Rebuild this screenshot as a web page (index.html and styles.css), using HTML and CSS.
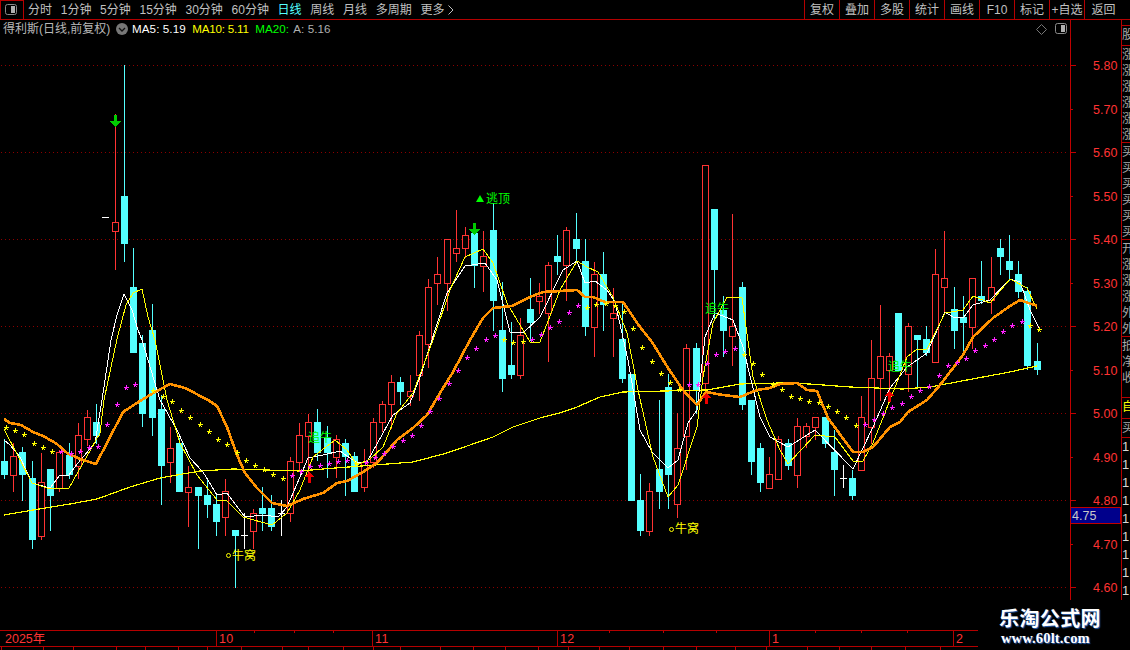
FILE: index.html
```html
<!DOCTYPE html>
<html lang="zh">
<head>
<meta charset="utf-8">
<title>得利斯 日线</title>
<link rel="stylesheet" href="styles.css">
</head>
<body>
<div class="page">
  <header class="toolbar">
    <div class="panel-btn">
      <svg class="panel-icon" width="13" height="12" viewBox="0 0 13 12"><rect class="ic-frame" x="0.5" y="0.5" width="11" height="10" rx="2"/><rect class="ic-fill" x="6" y="2" width="4" height="7"/></svg>
    </div>
    <nav class="periods">
      <span>分时</span><span>1分钟</span><span>5分钟</span><span>15分钟</span><span>30分钟</span><span>60分钟</span><span class="active">日线</span><span>周线</span><span>月线</span><span>多周期</span><span class="more-item">更多<svg class="more" width="6" height="10" viewBox="0 0 6 10"><path d="M0.5 0.5l4.5 4.5-4.5 4.5"/></svg></span>
    </nav>
    <div class="actions">
      <span>复权</span><span>叠加</span><span>多股</span><span>统计</span><span>画线</span><span>F10</span><span>标记</span><span>+自选</span><span class="last">返回</span>
    </div>
  </header>

  <div class="workspace">
    <div class="main">
      <div class="info">
        <span class="title">得利斯(日线,前复权)</span>
        <svg class="drop" width="12" height="12" viewBox="0 0 12 12"><circle class="drop-bg" cx="6" cy="6" r="6"/><path class="drop-ch" d="M3 5l3 3 3-3"/></svg>
        <span class="ma w">MA5: 5.19</span>
        <span class="ma y">MA10: 5.11</span>
        <span class="ma g">MA20:</span>
        <span class="ma a">A: 5.16</span>
        <span class="info-tools">
          <svg width="11" height="11" viewBox="0 0 11 11"><path class="ic-thin" d="M5.5 0.5l5 5-5 5-5-5z"/></svg>
          <svg width="13" height="12" viewBox="0 0 13 12"><rect class="ic-frame" x="0.5" y="0.5" width="11" height="10" rx="2"/><rect class="ic-fill" x="6" y="2" width="4" height="7"/></svg>
        </span>
      </div>
      <svg id="chart" class="chart" width="1121" height="562" viewBox="0 38 1121 562"></svg>
    </div>
    <aside class="strip">
      <div class="cell c1">股</div>
      <div class="cell c2">涨涨涨涨涨涨</div>
      <div class="cell c3">买买买买买买</div>
      <div class="cell c4">开涨涨涨外外</div>
      <div class="cell c5">抵净收</div>
      <div class="cell c6">自</div>
      <div class="cell c7">买</div>
      <div class="nums"><span>1</span><span>1</span><span>1</span><span>1</span><span>1</span><span>1</span><span>1</span><span>1</span><span>1</span></div>
    </aside>
  </div>

  <div class="spacer"></div>

  <div class="timeline">
    <span class="t t0">2025年</span><span class="t">10</span><span class="t">11</span><span class="t">12</span><span class="t">1</span><span class="t">2</span>
    <svg id="ticks" class="ticks" width="978" height="20" viewBox="0 630 978 20"></svg>
  </div>

  <div class="watermark">
    <div class="wm-cn">乐淘公式网</div>
    <div class="wm-en">www.60lt.com</div>
  </div>
</div>
<script src="chart.js"></script>
</body>
</html>
```
FILE: styles.css
```css
* { box-sizing: border-box; }
html, body { margin: 0; padding: 0; background: #000; }
body { font-family: "Liberation Sans", "Noto Sans CJK SC", sans-serif; font-size: 12px; color: #c0c0c0; overflow: hidden; }
.page { position: relative; width: 1130px; height: 650px; overflow: hidden; display: flex; flex-direction: column; background: #000; }

.toolbar { height: 20px; flex: none; display: flex; align-items: stretch; border-bottom: 1px solid #b40000; line-height: 19px; padding-top: 0; }
.panel-btn { width: 24px; border: 1px solid #b40000; border-bottom: 0; display: flex; align-items: center; padding-left: 4px; }
.ic-frame { fill: none; stroke: #8a8a8a; }
.ic-fill { fill: #b0b0b0; }
.ic-thin { fill: none; stroke: #777; }
.periods { display: flex; gap: 8.7px; padding-left: 4px; white-space: nowrap; padding-top: 1px; }
.periods .active { color: #54ffff; }
.more-item { display: flex; align-items: center; gap: 4px; }
.more { flex: none; }
.more path { fill: none; stroke: #c0c0c0; }
.actions { margin-left: auto; display: flex; }
.actions span { width: 35px; border-left: 1px solid #b40000; text-align: center; padding-top: 1px; }
.actions .last { width: 46px; padding-right: 8px; }

.workspace { height: 580px; flex: none; display: flex; }
.main { width: 1122px; flex: none; border-right: 1px solid #b40000; display: flex; flex-direction: column; }
.info { height: 18px; width: 1071px; flex: none; border-right: 1px solid #b40000; display: flex; align-items: center; white-space: nowrap; padding-left: 3px; line-height: 18px; }
.title { color: #b8b8b8; width: 113px; flex: none; }
.drop { flex: none; margin-right: 4px; }
.drop-bg { fill: #777; }
.drop-ch { fill: none; stroke: #111; stroke-width: 1.3; }
.ma { font-size: 11.6px; letter-spacing: 0.1px; margin-right: 6.5px; }
.ma.w { color: #fff; }
.ma.y { color: #ffff00; letter-spacing: -0.2px; }
.ma.g { color: #00ff00; margin-right: 4px; }
.ma.a { color: #b0b0b0; }
.info-tools { margin-left: auto; display: flex; align-items: center; gap: 8px; padding-right: 2px; }
.chart { display: block; flex: none; }

.grid { stroke: #8c0000; stroke-width: 1; fill: none; shape-rendering: crispEdges; }
.axis { stroke: #c00000; stroke-width: 1; shape-rendering: crispEdges; fill: none; }
.price { fill: #ff3333; font-size: 12.5px; font-family: "Liberation Sans", sans-serif; }
.wick-r, .body-r { fill: #ff3333; }
.body-r { stroke: #ff3333; fill: #000; shape-rendering: crispEdges; }
.wick-r, .wick-c, .body-c, .wick-d { shape-rendering: crispEdges; }
.wick-c, .body-c { fill: #54ffff; }
.wick-d { fill: #fff; }
.line { fill: none; shape-rendering: crispEdges; stroke-linejoin: round; }
.ma-white { stroke: #fff; stroke-width: 1; }
.ma-yellow { stroke: #ffff00; stroke-width: 1; }
.ma-long { stroke: #ffff00; stroke-width: 1.2; }
.ma-orange { stroke: #ff9200; stroke-width: 2.6; }
.star-y { stroke: #ffff00; stroke-width: 1; fill: none; shape-rendering: crispEdges; }
.star-m { stroke: #ff22ff; stroke-width: 1; fill: none; shape-rendering: crispEdges; }
.arrow-g { fill: #00cc00; shape-rendering: crispEdges; }
.arrow-r { fill: #ee0000; shape-rendering: crispEdges; }
.lab { font-family: "Noto Sans CJK SC", sans-serif; font-size: 12px; }
.lab-g { fill: #00ff00; }
.lab-y { fill: #ffff00; }
.ring { fill: none; stroke: #ffff00; stroke-width: 1; }
.tri { fill: #00ff00; }

.tag { fill: #00008b; stroke: #c00000; shape-rendering: crispEdges; }
.tag-text { fill: #c8c8c8; font-size: 12.5px; font-family: "Liberation Sans", sans-serif; }

.strip { width: 8px; flex: none; padding-top: 5px; display: flex; flex-direction: column; overflow: hidden; color: #a8a8a8; font-family: "Noto Sans CJK SC", sans-serif; line-height: 16px; }
.cell { overflow: hidden; width: 8px; border-top: 1px solid #b40000; word-break: break-all; flex: none; }
.c1 { height: 20px; }
.c2 { height: 97px; }
.c3 { height: 97px; }
.c4 { height: 97px; }
.c5 { height: 61px; }
.c6 { height: 21px; color: #ffff00; }
.c7 { height: 19px; }
.nums { border-top: 1px solid #b40000; display: flex; flex-direction: column; font-family: "Liberation Sans", sans-serif; font-size: 13px; line-height: 18px; color: #d8d8d8; overflow: hidden; }
.nums span { display: block; height: 18px; flex: none; }

.spacer { height: 30px; flex: none; }
.timeline { position: relative; width: 978px; height: 17px; flex: none; border-top: 1px solid #b40000; border-bottom: 1px solid #b40000; display: grid; grid-template-columns: 216px 156px 185px 212px 184px 25px; color: #ff3333; line-height: 16px; font-size: 12.5px; }
.t { padding-left: 2px; border-left: 1px solid #b40000; letter-spacing: 0.4px; }
.t0 { border-left: 0; padding-left: 5px; letter-spacing: 0; }
.ticks { position: absolute; left: 0; top: -1px; }

.watermark { position: absolute; left: 999px; top: 606px; width: 110px; color: #fff; }
.wm-cn { font-family: "Noto Sans CJK SC", sans-serif; font-weight: 700; font-size: 20px; line-height: 24px; letter-spacing: 0.4px; text-shadow: 1px 1px 1px #2a5fb0; }
.wm-en { font-family: "Liberation Serif", serif; font-weight: 700; font-size: 14.5px; line-height: 17px; padding-left: 2px; letter-spacing: 0.15px; text-shadow: 1px 1px 1px #2a5fb0; }
```
FILE: chart.js
```js
var NS = "http://www.w3.org/2000/svg";
var svg = document.getElementById("chart");

function el(parent, name, cls, attrs, text) {
  var e = document.createElementNS(NS, name);
  if (cls) e.setAttribute("class", cls);
  for (var k in attrs) e.setAttribute(k, attrs[k]);
  if (text) e.textContent = text;
  parent.appendChild(e);
  return e;
}
function col(i) { return Math.floor(4.5 + 9.22 * i); }

/* [high, low, bodyTop, bodyBottom, type] in chart pixels: r = up, c = down, d = doji */
var candles = [
[439,478,461,474,"c"],[443,491,456,475,"r"],[447,500,452,474,"c"],[461,548,478,539,"c"],
[453,539,482,536,"r"],[469,530,469,495,"c"],[450,491,452,488,"r"],[443,478,455,474,"c"],
[423,478,435,466,"r"],[410,445,417,439,"r"],[404,443,422,435,"c"],[217,217,217,217,"d"],
[114,269,222,231,"r"],[65,261,196,243,"c"],[248,352,287,352,"c"],[335,426,343,413,"c"],
[304,435,330,417,"c"],[395,504,409,465,"c"],[427,482,448,462,"r"],[438,491,443,491,"c"],
[466,526,487,492,"r"],[487,548,487,495,"c"],[478,517,495,504,"c"],[495,535,504,521,"c"],
[479,535,491,517,"r"],[530,587,530,535,"c"],[513,548,535,535,"d"],[509,548,513,531,"r"],
[487,530,508,513,"c"],[495,530,508,526,"c"],[500,535,513,513,"d"],[457,521,461,513,"r"],
[423,469,435,462,"r"],[414,473,422,436,"r"],[409,460,422,452,"c"],[426,477,438,452,"c"],
[435,477,439,457,"r"],[439,495,443,456,"c"],[452,491,456,491,"c"],[449,491,462,487,"r"],
[418,467,422,462,"r"],[401,431,404,422,"r"],[375,428,382,404,"r"],[377,404,382,391,"c"],
[375,405,391,396,"r"],[331,400,335,375,"r"],[279,367,287,344,"r"],[257,304,274,283,"r"],
[239,310,239,283,"r"],[210,261,248,253,"r"],[227,257,235,248,"r"],[223,287,233,265,"c"],
[231,291,256,266,"r"],[203,330,230,300,"c"],[282,391,330,378,"c"],[322,378,365,374,"c"],
[318,378,335,375,"r"],[278,340,309,322,"c"],[283,313,296,301,"r"],[262,361,265,313,"r"],
[235,274,256,261,"c"],[227,300,230,265,"r"],[213,261,239,248,"c"],[239,335,261,326,"c"],
[262,356,274,327,"r"],[252,330,274,304,"c"],[288,356,313,318,"r"],[304,382,339,378,"c"],
[374,500,374,500,"c"],[474,535,500,530,"c"],[483,535,491,531,"r"],[400,508,469,491,"c"],
[374,508,387,474,"c"],[413,517,448,504,"r"],[344,469,348,436,"r"],[343,413,348,390,"c"],
[165,403,165,383,"r"],[209,320,209,269,"c"],[296,356,310,330,"c"],[214,365,326,336,"r"],
[282,409,287,404,"c"],[400,474,400,461,"c"],[443,491,448,482,"c"],[457,488,474,488,"r"],
[436,479,439,479,"r"],[439,469,443,465,"c"],[418,487,426,475,"r"],[423,447,426,436,"r"],
[417,439,417,427,"r"],[417,447,417,443,"c"],[430,495,452,469,"c"],[465,487,478,478,"d"],
[470,499,478,495,"c"],[396,470,417,470,"r"],[340,443,378,427,"r"],[305,400,356,378,"r"],
[353,397,356,370,"r"],[313,370,313,370,"c"],[323,391,326,374,"r"],[335,387,335,339,"c"],
[326,355,339,352,"c"],[249,362,274,362,"r"],[231,313,278,287,"r"],[287,348,309,330,"c"],
[296,353,317,322,"c"],[278,348,278,327,"r"],[261,303,296,300,"c"],[257,313,287,300,"r"],
[239,274,248,256,"c"],[235,280,261,269,"c"],[261,297,274,291,"c"],[287,369,291,365,"c"],
[343,374,361,369,"c"]
];

var white = [4,440,10,445,20,457,32,483,50,488,60,475,69,475,78,463,95,443,102,400,111,340,117,315,124,294,132,310,138,330,142,340,160,400,177,430,190,458,203,472,217,495,227,493,245,517,263,515,278,517,287,507,300,477,308,458,323,455,340,451,357,463,367,462,393,415,410,403,420,377,447,293,465,266,485,263,497,280,510,332,523,333,540,317,563,270,577,261,585,283,595,281,607,290,615,302,628,360,640,430,652,452,668,468,678,460,688,423,697,410,705,337,715,313,733,320,743,347,760,417,770,437,788,447,815,430,853,469,873,427,890,388,907,367,927,353,945,312,953,317,963,318,973,305,990,300,1010,279,1020,282,1030,310,1039,328];
var yellow = [4,429,20,460,32,483,50,489,69,488,100,433,104,400,117,339,126,305,133,293,142,289,148,317,155,340,167,400,180,443,197,475,217,500,227,501,243,517,272,525,287,513,300,490,313,457,335,440,347,450,357,465,370,459,383,447,397,413,413,393,433,340,450,290,465,257,483,249,493,263,507,303,530,342,540,342,560,290,577,261,587,267,598,272,613,297,627,333,638,390,653,457,668,497,678,485,697,427,703,377,713,323,727,297,742,298,753,377,767,420,780,450,788,464,815,435,835,437,853,461,863,461,873,443,890,400,907,357,917,349,927,349,945,313,963,310,973,296,990,303,1010,279,1027,288,1037,309];
var longMa = [4,515,33,510,70,504,97,499,130,487,160,478,200,471,233,469,300,471,323,469,413,462,447,453,493,437,513,427,540,418,560,413,577,407,600,397,623,392,707,390,740,384,780,383,810,384,850,387,903,389,930,387,967,380,1010,372,1037,366];
var orange = [4,419,10,423,21,425,33,432,43,436,57,444,67,453,80,459,96,464,107,443,123,412,140,401,155,392,170,384,185,388,208,400,217,406,227,427,237,455,245,473,257,488,272,503,287,506,303,499,323,493,337,483,347,481,363,472,377,463,397,440,413,428,427,415,440,393,453,372,470,340,483,318,493,308,512,306,530,297,543,292,560,291,577,290,585,297,593,297,605,302,623,302,640,327,652,342,668,368,683,390,697,405,706,392,723,395,740,397,757,390,770,388,780,384,797,383,807,390,817,391,828,418,853,452,863,452,873,447,890,427,900,422,908,412,927,400,940,385,963,355,973,337,993,318,1010,306,1020,300,1037,306];

var starsY = [6,427,15,430,24,434,34,443,43,447,52,451,153,390,163,396,172,401,181,410,190,417,200,424,209,431,218,439,227,444,237,452,246,460,255,465,264,469,273,474,283,478,356,463,504,339,513,342,523,341,587,307,596,304,606,303,615,305,624,311,633,328,642,347,652,361,661,373,670,382,679,389,744,354,753,363,762,374,773,384,782,389,791,396,800,398,809,401,819,402,828,406,837,411,846,417,856,425,1030,325,1039,329];
var starsM = [61,451,71,453,80,451,89,447,98,446,107,424,117,404,126,387,135,384,292,475,301,471,310,466,320,465,329,463,338,461,347,460,366,462,375,457,384,453,393,446,403,440,412,435,421,425,430,411,439,398,449,383,458,370,467,357,476,348,486,339,495,335,532,339,541,334,550,327,559,321,569,312,578,305,689,384,698,384,707,363,716,354,725,351,735,348,865,424,874,419,883,413,892,407,902,403,911,396,920,390,929,386,939,375,948,365,957,362,966,358,975,350,985,345,994,339,1003,331,1012,325,1022,321];

/* grid: single dots every 4 pixels */
var gridPath = "";
[65,152,239,326,413,500,587].forEach(function (y) {
  for (var x = 1; x < 1066; x += 4) gridPath += "M" + x + " " + (y + 0.5) + "h1";
});
el(svg, "path", "grid", {d: gridPath});

/* candles */
candles.forEach(function (c, i) {
  var x = col(i), t = c[4];
  el(svg, "rect", "wick-" + t, {x: x, y: c[0], width: 1, height: Math.max(1, c[1] - c[0] + 1)});
  if (t === "r") {
    el(svg, "rect", "body-r", {x: x - 2.5, y: c[2] + 0.5, width: 6, height: c[3] - c[2]});
  } else if (t === "c") {
    el(svg, "rect", "body-c", {x: x - 3, y: c[2], width: 7, height: c[3] - c[2] + 1});
  } else {
    el(svg, "rect", "wick-d", {x: x - 3, y: c[3], width: 7, height: 1});
  }
});

function poly(arr, cls) {
  var pts = [];
  for (var i = 0; i < arr.length; i += 2) pts.push(arr[i] + "," + arr[i + 1]);
  el(svg, "polyline", "line " + cls, {points: pts.join(" ")});
}
poly(longMa, "ma-long");
poly(white, "ma-white");
poly(yellow, "ma-yellow");
poly(orange, "ma-orange");

function stars(arr, cls) {
  var d = "";
  for (var i = 0; i < arr.length; i += 2) {
    var x = arr[i] + 0.5, y = arr[i + 1] + 0.5;
    d += "M" + (x - 2.5) + " " + y + "h5M" + x + " " + (y - 2.5) + "v2M" + (x - 1.5) + " " + (y + 2.5) + "l1.5-2 1.5 2";
  }
  el(svg, "path", cls, {d: d});
}
stars(starsM, "star-m");
stars(starsY, "star-y");

/* arrows */
function downArrow(x, y) { el(svg, "path", "arrow-g", {d: "M" + (x - 1) + " " + y + "h3v6h4l-5.5 6.5-5.5-6.5h4z"}); }
function upArrow(x, y) { el(svg, "path", "arrow-r", {d: "M" + (x + 0.5) + " " + y + "l4.5 5h-3v6h-3v-6h-3z"}); }
downArrow(115, 115);
downArrow(474, 223);
upArrow(309, 472);
upArrow(706, 393);
upArrow(889, 391);

/* signals */
function label(x, y, txt, cls) { el(svg, "text", "lab " + cls, {x: x, y: y}, txt); }
el(svg, "path", "tri", {d: "M476 202l4-7 4 7z"});
label(486, 203, "逃顶", "lab-g");
[[308, 442], [705, 313], [888, 371]].forEach(function (p) { label(p[0], p[1], "追牛", "lab-g"); });
el(svg, "circle", "ring", {cx: 228.5, cy: 555.5, r: 2});
label(232, 560, "牛窝", "lab-y");
el(svg, "circle", "ring", {cx: 671.5, cy: 529.5, r: 2});
label(675, 533, "牛窝", "lab-y");

/* price axis */
el(svg, "line", "axis", {x1: 1070.5, x2: 1070.5, y1: 38, y2: 600});
[[65,"5.80"],[109,"5.70"],[152,"5.60"],[196,"5.50"],[239,"5.40"],[283,"5.30"],[326,"5.20"],[370,"5.10"],[413,"5.00"],[457,"4.90"],[500,"4.80"],[544,"4.70"],[587,"4.60"]].forEach(function (p, i) {
  var len = i % 2 ? 2 : 5;
  el(svg, "line", "axis", {x1: 1071, x2: 1071 + len, y1: p[0] + 0.5, y2: p[0] + 0.5});
  el(svg, "text", "price", {x: 1093, y: p[0] + 5}, p[1]);
});
el(svg, "rect", "tag", {x: 1070.5, y: 507.5, width: 50, height: 16});
el(svg, "text", "tag-text", {x: 1072, y: 520}, "4.75");

/* time axis ticks */
var tk = document.getElementById("ticks"), d = "";
[254,294,333,609,663,716,815,861,907].forEach(function (x) { d += "M" + (x + 0.5) + " 631v2"; });
[1,43,73,116,145,178,207,241,282,308,343,373,400,440,473,505,538,568,599,629,663,696,735,766,807,839,871,905,940].forEach(function (x) { d += "M" + (x + 0.5) + " 647v3"; });
el(tk, "path", "axis", {d: d});
```
